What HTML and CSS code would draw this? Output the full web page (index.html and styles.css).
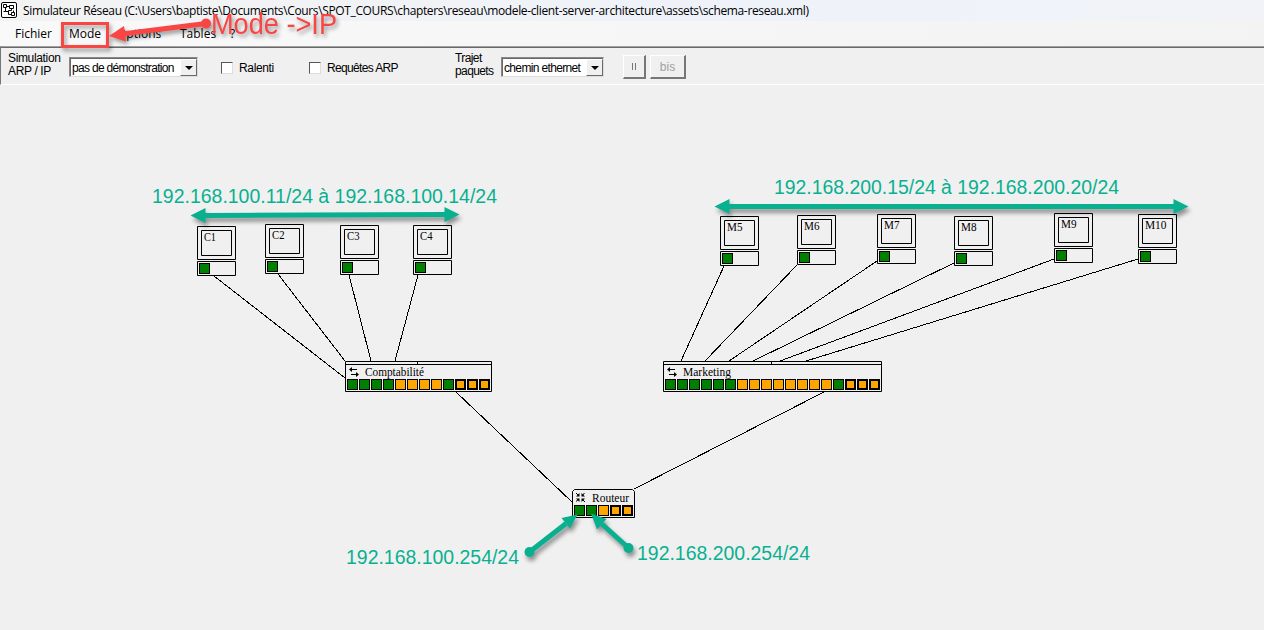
FILE: index.html
```html
<!DOCTYPE html>
<html lang="fr">
<head>
<meta charset="utf-8">
<title>Simulateur Réseau</title>
<link rel="stylesheet" href="styles.css">
</head>
<body>
<div class="window">
  <header class="titlebar">
    <svg class="app-icon" width="16" height="16" viewBox="0 0 16 16">
      <rect x=".5" y=".5" width="15" height="15" rx="1.5"/>
      <path d="M2.500 2.500h3v3h-3zM8.500 3.500h4v3h-4zM10.500 10.500h3v3h-3zM5.500 4.500h3M4.500 5.500v4h3v3h3M2.500 9.500h2M10.500 6.500v2h-3v2M12.500 8.500v2"/>
    </svg>
    <svg class="title-text" width="800" height="20"><text x="0" y="15" textLength="786">Simulateur Réseau (C:\Users\baptiste\Documents\Cours\SPOT_COURS\chapters\reseau\modele-client-server-architecture\assets\schema-reseau.xml)</text></svg>
  </header>
  <nav class="menubar">
    <span class="item fichier">Fichier</span>
    <span class="item mode">Mode</span>
    <span class="item options">Options</span>
    <span class="item tables">Tables</span>
    <span class="item">?</span>
  </nav>
  <div class="toolbar">
    <div class="label simulation">Simulation<br>ARP / IP</div>
    <div class="select demo"><span class="value">pas de démonstration</span><span class="drop"><i></i></span></div>
    <label class="check slow"><i></i>Ralenti</label>
    <label class="check arp"><i></i>Requêtes ARP</label>
    <div class="label path">Trajet<br>paquets</div>
    <div class="select route"><span class="value">chemin ethernet</span><span class="drop"><i></i></span></div>
    <button class="btn pause"><i></i></button>
    <button class="btn again">bis</button>
  </div>
  <main class="canvas">
    <svg width="1264" height="545" viewBox="0 85 1264 545">
      <defs>
        <g id="pc">
          <path class="outline" d="M.5.5h38v33h-38zM4.500 4.500h30v25h-30zM.5 35.500h38v14h-38z"/>
          <rect class="port on" x="2.500" y="37.500" width="10" height="10"/>
        </g>
        <rect id="on" class="port on" x=".5" y=".5" width="10" height="10"/>
        <rect id="off" class="port off" x=".5" y=".5" width="10" height="10"/>
        <rect id="ext" class="port ext" x="1" y="1" width="9" height="9"/>
        <path id="swap" class="solid" d="M0 2.500L3 0v2h5v1H3v2zM10 7.500L7 5v2H2v1h5v2z"/>
      </defs>

      <g class="cables">
        <path d="M214 276L345 378M278 274L345 361M349 275L371 361M418 275L395 361"/>
        <path d="M724 266L681 361M797 265L705 361M877 261L729 361M954 263L753 361M1054 259L780 361M1138 259L806 361"/>
        <path d="M456 392L572 502M824 392L634 489"/>
      </g>

      <g class="names">
        <use href="#pc" x="197" y="226"/><text x="204" y="241" textLength="12" lengthAdjust="spacingAndGlyphs">C1</text>
        <use href="#pc" x="265" y="224"/><text x="272" y="239" textLength="12.500" lengthAdjust="spacingAndGlyphs">C2</text>
        <use href="#pc" x="340" y="225"/><text x="347" y="240" textLength="12.500" lengthAdjust="spacingAndGlyphs">C3</text>
        <use href="#pc" x="413" y="225"/><text x="420" y="240" textLength="12.500" lengthAdjust="spacingAndGlyphs">C4</text>
        <use href="#pc" x="720" y="216"/><text x="727" y="231" textLength="15.500" lengthAdjust="spacingAndGlyphs">M5</text>
        <use href="#pc" x="797" y="215"/><text x="804" y="230" textLength="15.500" lengthAdjust="spacingAndGlyphs">M6</text>
        <use href="#pc" x="877" y="214"/><text x="884" y="229" textLength="15.500" lengthAdjust="spacingAndGlyphs">M7</text>
        <use href="#pc" x="954" y="216"/><text x="961" y="231" textLength="15.500" lengthAdjust="spacingAndGlyphs">M8</text>
        <use href="#pc" x="1054" y="213"/><text x="1061" y="228" textLength="15.500" lengthAdjust="spacingAndGlyphs">M9</text>
        <use href="#pc" x="1138" y="214"/><text x="1145" y="229" textLength="21.500" lengthAdjust="spacingAndGlyphs">M10</text>
      </g>

      <g class="names">
        <path class="outline" d="M345.500 361.500h146v30h-146zM345.500 364.500h146M417.500 361v3"/>
        <use href="#swap" x="349" y="367"/>
        <text x="365" y="376" textLength="59" lengthAdjust="spacingAndGlyphs">Comptabilité</text>
        <use href="#on" x="347" y="379"/><use href="#on" x="359" y="379"/><use href="#on" x="371" y="379"/><use href="#on" x="383" y="379"/>
        <use href="#off" x="395" y="379"/><use href="#off" x="407" y="379"/><use href="#off" x="419" y="379"/><use href="#off" x="431" y="379"/>
        <use href="#on" x="443" y="379"/><use href="#ext" x="455" y="379"/><use href="#ext" x="467" y="379"/><use href="#ext" x="479" y="379"/>
      </g>

      <g class="names">
        <path class="outline" d="M663.500 361.500h218v30h-218zM663.500 364.500h218M771.500 361v3"/>
        <use href="#swap" x="667" y="367"/>
        <text x="683" y="376" textLength="48" lengthAdjust="spacingAndGlyphs">Marketing</text>
        <use href="#on" x="665" y="379"/><use href="#on" x="677" y="379"/><use href="#on" x="689" y="379"/><use href="#on" x="701" y="379"/><use href="#on" x="713" y="379"/><use href="#on" x="725" y="379"/>
        <use href="#off" x="737" y="379"/><use href="#off" x="749" y="379"/><use href="#off" x="761" y="379"/><use href="#off" x="773" y="379"/><use href="#off" x="785" y="379"/><use href="#off" x="797" y="379"/><use href="#off" x="809" y="379"/><use href="#off" x="821" y="379"/>
        <use href="#on" x="833" y="379"/><use href="#ext" x="845" y="379"/><use href="#ext" x="857" y="379"/><use href="#ext" x="869" y="379"/>
      </g>

      <g class="names">
        <path class="outline" d="M572.500 517.500v-26l2-2h58l2 2v26z"/>
        <path class="glyph" d="M576 493l3 3M584.500 493l-2.500 3M576 501.500l3-2.500M585 502l-3-3"/>
        <path class="solid" d="M579.500 493v3.500H576zM581.500 493v3.500h3.500zM576 498.500h3.500v3.500zM585 498.500h-3.500v3.500z"/>
        <text x="592" y="502" textLength="37" lengthAdjust="spacingAndGlyphs">Routeur</text>
        <use href="#on" x="574" y="505"/><use href="#on" x="586" y="505"/><use href="#off" x="598" y="505"/><use href="#ext" x="610" y="505"/><use href="#ext" x="622" y="505"/>
      </g>

      <g class="arrows">
        <path class="shaft" d="M204 215.500L446 214.500M728 206.500H1176M529.500 552L566 523.500M628.500 548L602 524"/>
        <path d="M190.500 215.500l15-7.500v15zM459.500 214.500l-15-7.500v15zM714.500 206.500l15-7.500v15zM1188.500 206.500l-15-7.500v15zM577.500 514.500L570 528.500 561.500 518zM591 513.500l15.500 5.500-9.500 10.500z"/>
        <circle cx="529.500" cy="552" r="5"/><circle cx="628.500" cy="548" r="5"/>
      </g>
      <g class="addresses">
        <text x="152" y="203" textLength="345" lengthAdjust="spacingAndGlyphs">192.168.100.11/24 à 192.168.100.14/24</text>
        <text x="774" y="194" textLength="345" lengthAdjust="spacingAndGlyphs">192.168.200.15/24 à 192.168.200.20/24</text>
        <text x="346" y="564" textLength="173" lengthAdjust="spacingAndGlyphs">192.168.100.254/24</text>
        <text x="637" y="560" textLength="173" lengthAdjust="spacingAndGlyphs">192.168.200.254/24</text>
      </g>
    </svg>
  </main>
  <svg class="callout" width="360" height="60">
    <rect x="62.500" y="23.500" width="45" height="23"/>
    <path class="shaft" d="M206 23.500L122 34"/>
    <path class="head" d="M109 36l15-10 2 15.500z"/>
    <circle cx="206" cy="23.500" r="5"/>
    <text x="211" y="34" textLength="126" lengthAdjust="spacingAndGlyphs">Mode -&gt;IP</text>
  </svg>
</div>
</body>
</html>
```
FILE: styles.css
```css
* { box-sizing: border-box; }
body { margin: 0; background: #f0f0f0; color: #000; font: 12px "Open Sans", "Noto Sans", sans-serif; }
.window { position: relative; width: 1264px; height: 630px; display: flex; flex-direction: column; overflow: hidden; }
.titlebar { height: 21px; display: flex; align-items: flex-start; padding: 2px 0 0 1px; background: linear-gradient(90deg, #f3f3f3, #eef2f9 60%, #f1f3f8); }
.app-icon { fill: #fff; stroke: #000; flex: none; }
.title-text { margin-left: 6px; margin-top: -2px; font-size: 12px; }
.menubar { height: 25px; display: flex; align-items: center; padding-left: 15px; background: linear-gradient(90deg, #f9f9f9, #f3f3f3); font-size: 12px; }
.item { white-space: nowrap; }
.fichier { width: 54px; }
.mode { width: 48px; }
.options { width: 63px; }
.tables { width: 50px; }
.toolbar { height: 39px; display: flex; align-items: flex-start; border-top: 1px solid #a0a0a0; border-left: 1px solid #777; border-bottom: 1px solid #fff; box-shadow: inset 0 1px #696969; font: 12px "Liberation Sans", Arial, sans-serif; letter-spacing: -.35px; }
.label { line-height: 13px; margin-top: 5px; white-space: nowrap; }
.simulation { width: 61px; margin-left: 7px; }
.path { width: 46px; letter-spacing: -.6px; }
.select { height: 20px; margin-top: 10px; display: flex; background: #fff; border: 1px solid #888; border-right-color: #ddd; border-bottom-color: #ddd; box-shadow: inset 1px 1px #696969; line-height: 20px; }
.demo { width: 129px; margin-right: 23px; }
.route { width: 103px; margin-right: 19px; }
.value { flex: 1; min-width: 0; padding-left: 2px; white-space: nowrap; letter-spacing: -.65px; }
.demo .value { letter-spacing: -.68px; }
.drop { flex: none; width: 17px; margin: 1px 0 0; background: #f0f0f0; border: 1px solid #fff; border-right-color: #696969; border-bottom-color: #696969; display: flex; align-items: center; justify-content: center; }
.drop i { border: 4px solid transparent; border-top-color: #000; border-bottom: 0; }
.check { display: flex; gap: 6px; align-items: center; margin-top: 13px; height: 15px; white-space: nowrap; }
.check i { width: 12px; height: 12px; background: #fff; border: 1px solid #555; border-right-color: #ddd; border-bottom-color: #ddd; }
.slow { width: 88px; }
.arp { width: 146px; letter-spacing: -.65px; }
.btn { height: 24px; margin: 8px 4px 0 0; padding: 0; background: #f0f0f0; border: 1px solid #fff; border-right: 2px solid #777; border-bottom: 2px solid #777; color: #a0a0a0; font: 12px "Liberation Sans", Arial, sans-serif; }
.pause { width: 23px; display: flex; align-items: center; justify-content: center; }
.pause i { width: 4px; height: 7px; border: solid #777; border-width: 0 1px; }
.again { width: 36px; }
.canvas { height: 545px; }
.canvas svg { display: block; }
.cables path { fill: none; stroke: #000; shape-rendering: crispEdges; }
.outline { fill: #f0f0f0; stroke: #000; }
.names { font: 12px "Liberation Serif", "Times New Roman", serif; }
.port { stroke: #000; }
.on { fill: #008000; }
.off, .ext { fill: #ffa500; }
.ext { stroke-width: 2px; }
.glyph { fill: none; stroke: #000; stroke-width: 1px; }
.solid { fill: #000; }
.arrows { fill: #08b090; filter: drop-shadow(2px 4px 2px rgba(0, 0, 0, .4)); }
.arrows .shaft { stroke: #08b090; stroke-width: 5px; fill: none; }
.addresses { fill: #08b090; font: 20px "Liberation Sans", Arial, sans-serif; }
.callout { position: absolute; left: 0; top: 0; fill: #fa4545; font: 29px "Liberation Sans", Arial, sans-serif; filter: drop-shadow(2px 3px 2px rgba(0, 0, 0, .4)); }
.callout rect { fill: none; stroke: #fa4545; stroke-width: 3px; }
.callout .shaft { stroke: #fa4545; stroke-width: 5px; }
```
